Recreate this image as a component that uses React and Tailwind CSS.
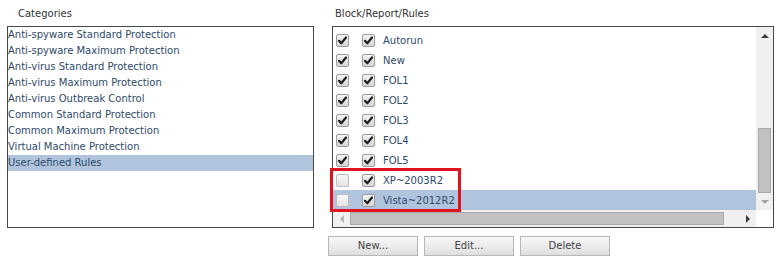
const categories = [
  "Anti-spyware Standard Protection",
  "Anti-spyware Maximum Protection",
  "Anti-virus Standard Protection",
  "Anti-virus Maximum Protection",
  "Anti-virus Outbreak Control",
  "Common Standard Protection",
  "Common Maximum Protection",
  "Virtual Machine Protection",
  "User-defined Rules",
];

const rules = [
  { name: "Autorun", block: true, report: true },
  { name: "New", block: true, report: true },
  { name: "FOL1", block: true, report: true },
  { name: "FOL2", block: true, report: true },
  { name: "FOL3", block: true, report: true },
  { name: "FOL4", block: true, report: true },
  { name: "FOL5", block: true, report: true },
  { name: "XP~2003R2", block: false, report: true },
  { name: "Vista~2012R2", block: false, report: true, selected: true },
];

const Check = ({ checked }) => (
  <div
    className={`w-[13px] h-[13px] rounded-[2px] border flex items-center justify-center ${
      checked
        ? "border-[#9a9a9a] bg-gradient-to-b from-[#f4f4f4] to-[#d6d6d6]"
        : "border-[#bdbdbd] bg-gradient-to-b from-[#f7f7f7] to-[#e4e4e4]"
    }`}
  >
    {checked && (
      <svg width="11" height="11" viewBox="0 0 11 11">
        <path d="M2 5.8 L4.3 8.3 L9 2.5" fill="none" stroke="#1e1e1e" strokeWidth="2.2" strokeLinecap="round" strokeLinejoin="round" />
      </svg>
    )}
  </div>
);

const Arrow = ({ dir, color }) => {
  const pts = {
    up: "0,4 4,0 8,4",
    down: "0,0 8,0 4,4",
    left: "4,0 4,8 0,4",
    right: "0,0 4,4 0,8",
  }[dir];
  const w = dir === "up" || dir === "down" ? 8 : 4;
  const h = dir === "up" || dir === "down" ? 4 : 8;
  return (
    <svg width={w} height={h} viewBox={`0 0 ${w} ${h}`}>
      <polygon points={pts} fill={color} />
    </svg>
  );
};

const Button = ({ children }) => (
  <button className="w-[90px] h-[20px] border border-[#b8b8b8] bg-gradient-to-b from-[#f8f8f8] to-[#dedede] text-[10px] text-[#444] leading-none">
    {children}
  </button>
);

export default function App() {
  return (
    <div
      className="w-[781px] h-[264px] bg-white flex text-[10px]"
      style={{ fontFamily: '"DejaVu Sans", Verdana, sans-serif' }}
    >
      {/* Categories */}
      <div className="ml-[7px] w-[307px] flex flex-col">
        <div className="h-[26px] pl-[11px] pt-[6px] text-[#333]">Categories</div>
        <div className="h-[202px] border border-[#474747] flex flex-col">
          {categories.map((c, i) => (
            <div
              key={i}
              className={`h-[16px] leading-[16px] whitespace-nowrap text-[#2e4a6a] ${
                i === categories.length - 1 ? "bg-[#b0c4de]" : ""
              }`}
            >
              {c}
            </div>
          ))}
        </div>
      </div>

      {/* Block/Report/Rules */}
      <div className="ml-[14px] w-[446px] flex flex-col relative">
        <div className="h-[26px] pl-[7px] pt-[6px] text-[#333]">Block/Report/Rules</div>
        <div className="ml-[4px] w-[442px] h-[202px] border border-[#474747] flex flex-col">
          <div className="flex h-[183px]">
            <div className="flex-1 pt-[3px] flex flex-col">
              {rules.map((r, i) => (
                <div
                  key={i}
                  className={`h-[20px] flex items-center ${r.selected ? "bg-[#b0c4de]" : ""}`}
                >
                  <div className="ml-[3px]">
                    <Check checked={r.block} />
                  </div>
                  <div className="ml-[13px]">
                    <Check checked={r.report} />
                  </div>
                  <span className="ml-[8px] text-[#2e4a6a] whitespace-nowrap">{r.name}</span>
                </div>
              ))}
            </div>
            {/* vertical scrollbar */}
            <div className="w-[17px] bg-[#f0f0f0] flex flex-col items-center">
              <div className="h-[17px] flex items-center justify-center">
                <Arrow dir="up" color="#3c3c3c" />
              </div>
              <div className="h-[84px]" />
              <div className="w-[13px] h-[65px] bg-[#c1c1c1] border border-[#a9a9a9]" />
              <div className="h-[17px] flex items-center justify-center">
                <Arrow dir="down" color="#a3a3a3" />
              </div>
            </div>
          </div>
          {/* horizontal scrollbar */}
          <div className="flex h-[17px]">
            <div className="flex-1 bg-[#f0f0f0] flex items-center">
              <div className="w-[17px] flex justify-center">
                <Arrow dir="left" color="#b5b5b5" />
              </div>
              <div className="w-[374px] h-[13px] bg-[#c1c1c1] border border-[#a9a9a9]" />
              <div className="flex-1" />
              <div className="w-[17px] flex justify-center">
                <Arrow dir="right" color="#3c3c3c" />
              </div>
            </div>
            <div className="w-[17px] bg-white" />
          </div>
        </div>
        <div className="flex gap-[6px] mt-[8px]">
          <Button>New...</Button>
          <Button>Edit...</Button>
          <Button>Delete</Button>
        </div>
        {/* highlight box */}
        <div className="absolute left-[2px] top-[168px] w-[131px] h-[44px] border-[3px] border-[#e0141e]" />
      </div>
    </div>
  );
}
